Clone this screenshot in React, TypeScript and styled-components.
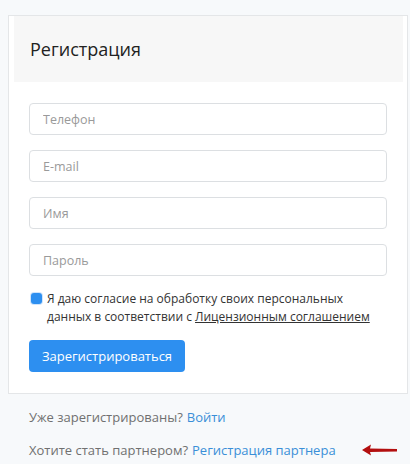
import React from 'react';
import styled, { createGlobalStyle } from 'styled-components';

const GlobalStyle = createGlobalStyle`
  body {
    margin: 0;
    background: #f7f9fb;
    font-family: "Open Sans", "Noto Sans", sans-serif;
  }
`;

const Page = styled.div`
  padding: 15px 2px 0 8px;
`;

const Card = styled.div`
  background: #ffffff;
  border: 1px solid #e4e6e8;
  padding: 0 0 21px;
`;

const Header = styled.div`
  height: 66px;
  margin: 0 4px 0 5px;
  padding-left: 16px;
  background: #f7f7f7;
  display: flex;
  align-items: center;
  font-size: 18px;
  color: #222;
`;

const Form = styled.form`
  padding: 21px 20px 0;
  display: flex;
  flex-direction: column;
`;

const Input = styled.input`
  height: 32px;
  box-sizing: border-box;
  border: 1px solid #dcdfe2;
  border-radius: 4px;
  padding: 0 13px;
  margin-bottom: 15px;
  font-family: inherit;
  font-size: 12.5px;
  color: #333;
  &::placeholder {
    color: #9a9a9a;
  }
`;

const Agree = styled.label`
  display: flex;
  align-items: flex-start;
  gap: 5px;
  font-size: 12px;
  line-height: 18px;
  color: #333;
  margin-top: -1px;
  a {
    color: #333;
    text-decoration: underline;
  }
`;

const Check = styled.span`
  flex: none;
  width: 11px;
  height: 11px;
  margin: 3px 0 0 2px;
  border-radius: 3px;
  background: #2d8ff0;
  box-shadow: 0 0 0 1px #cfe4fb;
`;

const Submit = styled.button`
  align-self: flex-start;
  margin-top: 14px;
  height: 32px;
  width: 156px;
  border: 0;
  border-radius: 4px;
  background: #2d8ff0;
  color: #fff;
  font-family: inherit;
  font-size: 13px;
`;

const Footer = styled.div`
  padding: 14px 0 0 21px;
  display: flex;
  flex-direction: column;
  gap: 15px;
`;

const FooterLine = styled.div`
  display: flex;
  align-items: center;
  font-size: 13px;
  line-height: 18px;
  color: #707070;
  a {
    color: #3a8fd8;
    text-decoration: none;
    margin-left: 4px;
  }
`;

const Pointer = styled.svg`
  margin-left: auto;
  margin-right: 10px;
`;

const App = () => {
  return (
    <>
      <GlobalStyle />
      <Page>
        <Card>
          <Header>Регистрация</Header>
          <Form>
            <Input placeholder="Телефон" />
            <Input placeholder="E-mail" />
            <Input placeholder="Имя" />
            <Input placeholder="Пароль" type="password" />
            <Agree>
              <Check />
              <span>
                Я даю согласие на обработку своих персональных
                <br />
                данных в соответствии с <a href="#">Лицензионным соглашением</a>
              </span>
            </Agree>
            <Submit type="button">Зарегистрироваться</Submit>
          </Form>
        </Card>
        <Footer>
          <FooterLine>
            Уже зарегистрированы?<a href="#">Войти</a>
          </FooterLine>
          <FooterLine>
            Хотите стать партнером?<a href="#">Регистрация партнера</a>
            <Pointer width="37" height="14" viewBox="0 0 37 14">
              <path d="M1 7 L10 1.5 L9 5.5 L36 6 L36 8.5 L9 9 L10 12.5 Z" fill="#b30f0f" />
            </Pointer>
          </FooterLine>
        </Footer>
      </Page>
    </>
  );
};

export default App;
